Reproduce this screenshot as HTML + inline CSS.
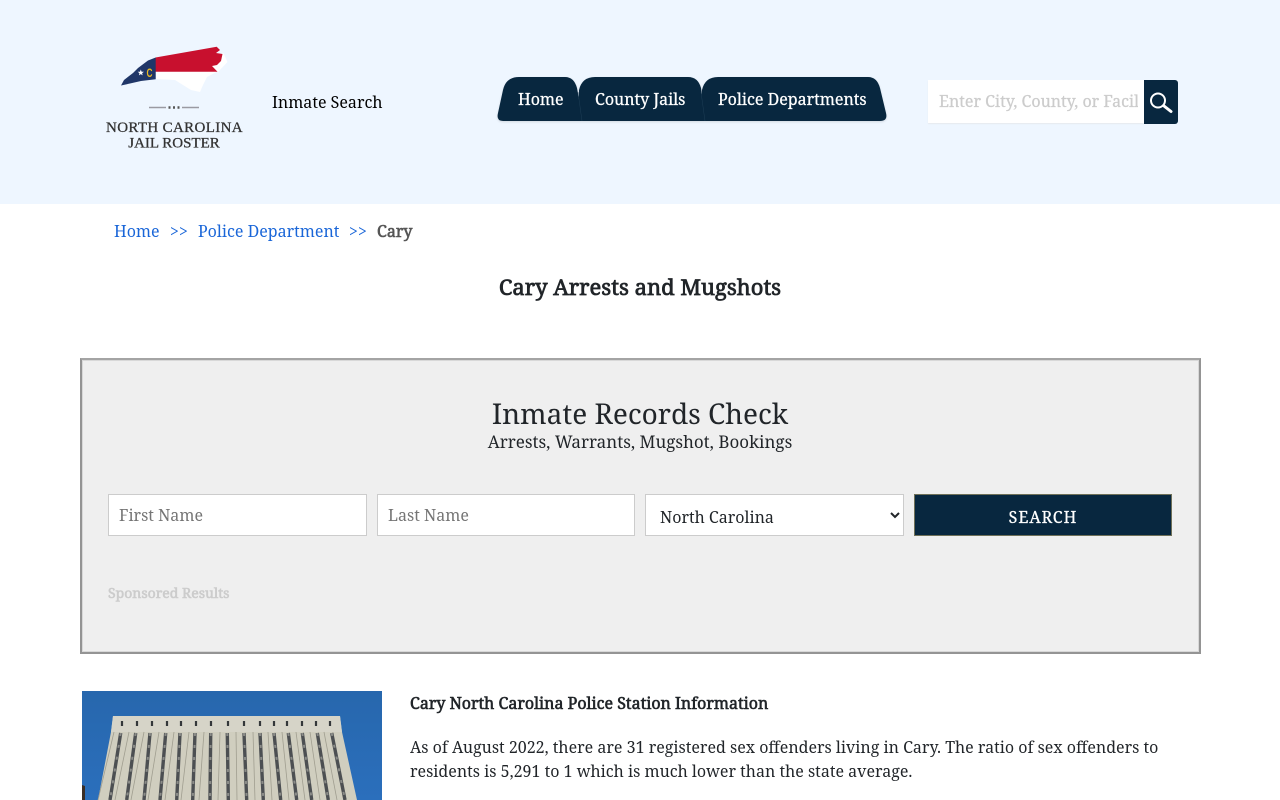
<!DOCTYPE html>
<html lang="en"><head><meta charset="utf-8"><title>Cary Arrests and Mugshots</title>
<style>
html,body{margin:0;padding:0;width:1280px;height:800px;overflow:hidden;background:#fff}
body{font-family:"Noto Serif","Droid Serif","Noto Serif CJK SC","DejaVu Serif","Liberation Serif",serif;font-size:16px;color:#212529;position:relative}
.t{position:absolute;white-space:nowrap;line-height:24px}
.b{-webkit-text-stroke:.6px currentColor}
.m{-webkit-text-stroke:.25px currentColor}
.hdr{position:absolute;left:0;top:0;width:1280px;height:204px;background:#eef6ff}
a{color:#1a66d8;text-decoration:none}
.panel{position:absolute;box-sizing:border-box;left:80px;top:358px;width:1121px;height:296px;background:#efefef;border:2px solid #949494;border-top-color:#a4a4a4;box-shadow:inset 0 0 0 1px #d8d8d8}
.in{position:absolute;box-sizing:border-box;top:494px;height:42px;background:#fff;border:1px solid #ccc;color:#757575;font-size:16px;line-height:40px;padding-left:10px}
select{position:absolute;box-sizing:border-box;left:645px;top:494px;width:259px;height:42px;background:#fff;border:1px solid #ccc;border-radius:0;font:inherit;color:#212529;padding:4px 10px 0}
.btn{position:absolute;box-sizing:border-box;left:914px;top:494px;width:258px;height:42px;background:#08273f;border:1px solid #6f7058;color:#fff;text-align:center;line-height:44px;letter-spacing:1px}
</style></head><body>
<div class="hdr"></div>
<svg style="position:absolute;left:0;top:0" width="500" height="204" viewBox="0 0 500 204">
<path d="M156 71.700H217L207 77L203 85L200 92L191 90L175 80L156 79Z" fill="#fff"/>
<path d="M212 62L223.300 53L227.500 62L218 72H208Z" fill="#fff"/>
<path d="M155.500 57.500L216.700 46.700L220 50L216 53L222.500 54L221 61L217 65L212 66L217.500 71.700H155.500Z" fill="#c8102e"/>
<path d="M121 85.500L124 80L133 73L138 68L148 60.500L155.700 57.500V79.300L141 81L130 83.500Z" fill="#1f3668"/>
<path d="M140.800 69.500L141.600 71.700L143.900 71.800L142.100 73.200L142.700 75.400L140.800 74.100L138.900 75.400L139.500 73.200L137.700 71.800L140 71.700Z" fill="#fff"/>
<text x="146.500" y="77" font-family="Liberation Sans,sans-serif" font-size="12" font-weight="700" fill="#e8b923" textLength="6" lengthAdjust="spacingAndGlyphs">C</text>
<path d="M149 107.500H166M182 107.500H199" stroke="#9a9aa2" stroke-width="1.500"/>
<path d="M168.500 107.500h2M173 107.500h2M177.500 107.500h2" stroke="#555" stroke-width="2.500"/>
<text x="174.500" y="132" text-anchor="middle" font-family="Liberation Serif,serif" font-size="15" letter-spacing=".35" fill="#333" stroke="#333" stroke-width=".3">NORTH CAROLINA</text>
<text x="174" y="147.500" text-anchor="middle" font-family="Liberation Serif,serif" font-size="15" fill="#333" stroke="#333" stroke-width=".3">JAIL ROSTER</text>
</svg>
<div class="t" style="left:272px;top:90px;color:#000">Inmate Search</div>
<svg style="position:absolute;left:490px;top:70px" width="410" height="60" viewBox="490 70 410 60">
<g fill="#08273f" style="filter:drop-shadow(0 1px 1px rgba(0,0,0,.12))">
<path d="M503 121Q496 121 498 113L503 90Q506 77 519 77H565Q574 77 577 88L583 121Z"/>
<path d="M579 121V90Q582 77 595 77H688Q698 77 701 88L706 121Z"/>
<path d="M702 121V90Q705 77 718 77H868Q877 77 880 88L886 113Q888 121 880 121Z"/>
</g>
<path d="M578 92L582 121M701 92L705 121" stroke="#1d3d55" stroke-width=".5" fill="none"/></svg>
<div class="t m" style="left:518px;top:87px;color:#fff">Home</div>
<div class="t m" style="left:595px;top:87px;color:#fff">County Jails</div>
<div class="t m" style="left:718px;top:87px;color:#fff">Police Departments</div>
<div style="position:absolute;left:928px;top:80px;width:216px;height:43px;background:#fff;box-shadow:0 1px 1px #e6e9ee"><div style="position:absolute;left:11px;top:0;width:199px;height:43px;overflow:hidden"><span class="t m" style="left:0;top:9px;color:#ccc">Enter City, County, or Facility</span></div></div>
<div style="position:absolute;left:1144px;top:80px;width:34px;height:44px;background:#08273f;border-radius:0 3px 3px 0"></div>
<svg style="position:absolute;left:1144px;top:80px" width="34" height="44" viewBox="0 0 34 44" fill="none" stroke="#fff"><circle cx="14" cy="20.500" r="7" stroke-width="2"/><path d="M20 26L27 31.500" stroke-width="3" stroke-linecap="round"/></svg>

<a class="t" href="#" style="left:114px;top:219px">Home</a>
<a class="t" href="#" style="left:170px;top:219px">&gt;&gt;</a>
<a class="t" href="#" style="left:198px;top:219px">Police Department</a>
<a class="t" href="#" style="left:349px;top:219px">&gt;&gt;</a>
<div class="t b" style="left:377px;top:219px;color:#555">Cary</div>
<div class="t b" style="left:0;width:1280px;text-align:center;top:272px;line-height:30px;font-size:22px;-webkit-text-stroke-width:.75px">Cary Arrests and Mugshots</div>

<div class="panel"></div>
<div class="t" style="left:0;width:1280px;text-align:center;top:394px;line-height:40px;font-size:28px">Inmate Records Check</div>
<div class="t" style="left:0;width:1280px;text-align:center;top:430px;font-size:17px">Arrests, Warrants, Mugshot, Bookings</div>
<div class="in" style="left:108px;width:259px">First Name</div>
<div class="in" style="left:377px;width:258px">Last Name</div>
<select><option>North Carolina</option></select>
<div class="btn m">SEARCH</div>
<div class="t b" style="left:108px;top:582px;font-size:14px;color:#ccc">Sponsored Results</div>

<svg style="position:absolute;left:82px;top:691px" width="300" height="109" viewBox="82 691 300 109">
<defs><linearGradient id="s" x1="0" y1="0" x2="0" y2="1"><stop offset="0" stop-color="#2767ad"/><stop offset="1" stop-color="#2b6fbc"/></linearGradient></defs>
<rect x="82" y="691" width="300" height="109" fill="url(#s)"/>
<path d="M113 716H340L342 732L357 800H98L111 732Z" fill="#d0cebf"/>
<path d="M113 716H340L342 732H111Z" fill="#d6d4c8"/>
<path d="M82 785L85 786V800H82Z" fill="#3a2e26"/>
<g stroke="#a09e90" stroke-width=".8" fill="none"><path d="M114 732L98 800M129 732L115 800M144 732L131 800M159 732L148 800M174 732L165 800M189 732L181 800M204 732L199 800M220 732L218 800M236 732L237 800M253 732L255 800M268 732L272 800M282 732L289 800M296 732L305 800M310 732L320 800M324 732L337 800"/></g>
<g stroke="#4c4f52" stroke-width="3.400" fill="none"><path d="M120.700 733L110 800M135.700 733L126.700 800M150 733L144 800M165.700 733L160 800M180 733L176.700 800M195 733L192.700 800M210.700 733L210 800M227.300 733L228.300 800M244 733L246.700 800M260 733L263.300 800M274 733L280.700 800M288.300 733L296.700 800M302.300 733L311.700 800M317.300 733L328.300 800M331.700 733L345 800"/></g>
<g stroke="#8b8c88" stroke-width="2" stroke-dasharray="3 9" fill="none"><path d="M120.700 733L110 800M135.700 733L126.700 800M150 733L144 800M165.700 733L160 800M180 733L176.700 800M195 733L192.700 800M210.700 733L210 800M227.300 733L228.300 800M244 733L246.700 800M260 733L263.300 800M274 733L280.700 800M288.300 733L296.700 800M302.300 733L311.700 800M317.300 733L328.300 800M331.700 733L345 800"/></g>
<g stroke="#34373a" stroke-width="2.200"><path d="M122 721v5M137 721v5M152 721v5M167 721v5M181 721v5M196 721v5M211 721v5M228 721v5M244 721v5M260 721v5M274 721v5M287 721v5M302 721v5M316 721v5M330 721v5"/></g>
</svg>
<div class="t b" style="left:410px;top:691px">Cary North Carolina Police Station Information</div>
<div class="t" style="left:410px;top:735px">As of August 2022, there are 31 registered sex offenders living in Cary. The ratio of sex offenders to</div>
<div class="t" style="left:410px;top:759px">residents is 5,291 to 1 which is much lower than the state average.</div>
</body></html>
